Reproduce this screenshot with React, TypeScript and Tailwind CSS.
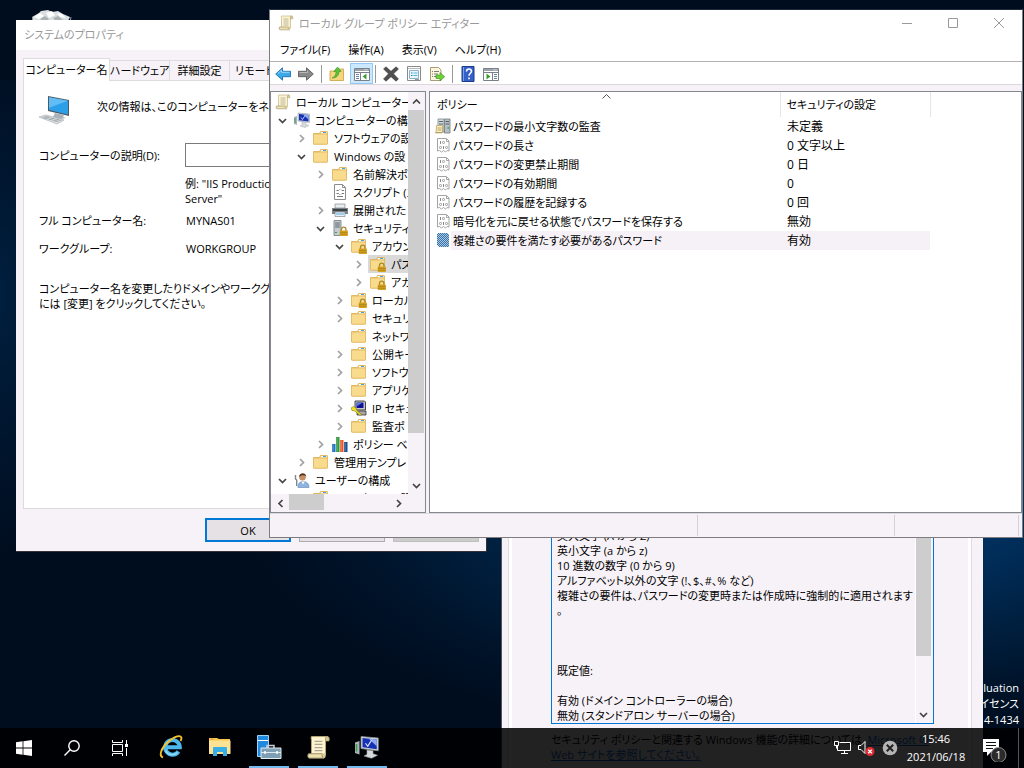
import type { ReactNode } from 'react';

export default function App() {
  return (
    <div className="relative h-screen w-full overflow-hidden bg-[#000d1f] bg-[radial-gradient(ellipse_580px_240px_at_80%_66%,#003a72_0%,#00305f_32%,#002244_54%,#001329_82%,#000d1f_100%)] font-['Open_Sans','Noto_Sans_CJK_JP',sans-serif] text-[11px] leading-[15px] text-black select-none [font-feature-settings:'palt']">
      <div className="absolute top-20 left-0 h-[480px] w-20 bg-[radial-gradient(ellipse_at_0%_45%,#001f3f,transparent_70%)]" />
      <RecycleBin />
      <Watermark />
      <PolicyDialog />
      <SystemProperties />
      <PolicyEditor />
      <Taskbar />
    </div>
  );
}

/* desktop */

function RecycleBin() {
  return (
    <svg className="absolute top-2 left-8" width="40" height="20" viewBox="0 0 40 20">
      <path d="M0 9l7-4 2-2 7-1 4 2 6-1 5 3 7 3-2 4H1z" fill="#d9dee0" />
      <path d="M2 9l6-4 4 3-5 3zM14 5l6-2 3 4-6 3zM25 5l5 1 4 4-6-1z" fill="#fff" />
      <path d="M8 11l5-3 4 3-3 3zM21 10l5-2 5 4-7 1z" fill="#a9b2b5" />
      <path d="M0 9l2 10h35l2-10" fill="none" stroke="#8d999e" />
    </svg>
  );
}

function Watermark() {
  return (
    <div className="absolute right-[5px] bottom-10 text-right leading-4 text-white">
      <p>luation</p>
      <p>イセンス</p>
      <p>4-1434</p>
    </div>
  );
}

/* policy explanation dialog */

const explanation = `英大文字 (A から Z)
英小文字 (a から z)
10 進数の数字 (0 から 9)
アルファベット以外の文字 (!、$、#、% など)
複雑さの要件は、パスワードの変更時または作成時に強制的に適用されます
。



既定値:

有効 (ドメイン コントローラーの場合)
無効 (スタンドアロン サーバーの場合)`;

function PolicyDialog() {
  return (
    <section className="absolute top-[480px] left-[501px] h-[330px] w-[482px] border border-r-0 border-[#555] bg-[#f7f2f7] pt-2 pr-[11px] pl-1.5">
      <div className="h-full border border-[#dcdcdc]">
        <div className="h-full border-x-[3px] border-white pt-[35px] pr-[34px] pl-[39px]">
          <div className="flex h-[199px] border border-[#0078d7]">
            <textarea readOnly aria-label="説明" className="flex-1 resize-none overflow-hidden pt-0.5 pl-[5px] leading-[15px] whitespace-pre outline-none" defaultValue={explanation} />
            <div className="mr-0.5 flex w-4 flex-col border-l border-white">
              <div className="h-[130px] bg-[#cdcdcd]" />
              <button aria-label="下へスクロール" className="mt-auto flex h-[18px] items-center justify-center">
                <Chevron dir="down" />
              </button>
            </div>
          </div>
          <p className="mt-2 -mr-5 whitespace-nowrap">
            セキュリティ ポリシーと関連する Windows 機能の詳細については、
            <a href="#help" className="text-[#0066cc] underline">
              Microsoft の<br />
              Web サイトを参照してください。
            </a>
          </p>
        </div>
      </div>
    </section>
  );
}

/* system properties */

const tabs = ['ハードウェア', '詳細設定', 'リモート'];

function SystemProperties() {
  return (
    <section className="absolute top-5 left-4 flex h-[532px] w-[471px] flex-col border-r border-b border-[#333] bg-[#f7f2f7]">
      <h1 className="h-[30px] bg-white pl-2 leading-[30px] text-[#999]">システムのプロパティ</h1>
      <div role="tablist" className="mt-2 ml-[7px] flex items-end">
        <button role="tab" aria-selected="true" className="z-10 -mb-px h-[23px] w-[87px] border border-b-0 border-[#dcdcdc] bg-white pb-0.5 whitespace-nowrap">
          コンピューター名
        </button>
        {tabs.map((tab) => (
          <button key={tab} role="tab" aria-selected="false" className="h-5 w-[60px] border-t border-r border-[#dcdcdc] whitespace-nowrap last:w-[50px]">
            {tab}
          </button>
        ))}
      </div>
      <div className="mx-[7px] flex-1 border border-[#dcdcdc] bg-white px-[15px] pt-[15px]">
        <div className="flex h-[31px]">
          <Computer />
          <p className="ml-[26px] pt-[3px] whitespace-nowrap">次の情報は、このコンピューターをネット</p>
        </div>
        <div className="mt-4 grid grid-cols-[146px_1fr] items-center">
          <label htmlFor="description">コンピューターの説明(D):</label>
          <input id="description" className="h-6 border border-[#7a7a7a] px-1" />
          <p className="col-start-2 mt-[9px]">
            例: "IIS Productio
            <br />
            Server"
          </p>
          <span className="mt-[7px]">フル コンピューター名:</span>
          <span className="mt-[7px] pl-px">MYNAS01</span>
          <span className="mt-[13px]">ワークグループ:</span>
          <span className="mt-[13px] pl-px">WORKGROUP</span>
        </div>
        <p className="mt-[25px] whitespace-nowrap">
          コンピューター名を変更したりドメインやワークグループ
          <br />
          には [変更] をクリックしてください。
        </p>
      </div>
      <div className="flex justify-end gap-2 py-[9px] pr-[7px]">
        <button className="h-6 w-[86px] border-2 border-[#0078d7] bg-[#e5e1e5]">OK</button>
        <button aria-label="キャンセル" className="h-6 w-[86px] border border-[#adadad] bg-[#e5e1e5]" />
        <button aria-label="適用" disabled className="h-6 w-[86px] border border-[#bfbfbf] bg-[#ccc]" />
      </div>
    </section>
  );
}

/* group policy editor */

const menus = ['ファイル(F)', '操作(A)', '表示(V)', 'ヘルプ(H)'];

type Node = { level: number; label: string; icon: ReactNode; open?: boolean; selected?: boolean };

const tree: Node[] = [
  { level: 0, label: 'ローカル コンピューター ポ', icon: <Scroll /> },
  { level: 1, label: 'コンピューターの構成', icon: <ComputerConfig />, open: true },
  { level: 2, label: 'ソフトウェアの設', icon: <Folder />, open: false },
  { level: 2, label: 'Windows の設', icon: <Folder />, open: true },
  { level: 3, label: '名前解決ポ', icon: <Folder />, open: false },
  { level: 3, label: 'スクリプト (ス', icon: <Script /> },
  { level: 3, label: '展開された', icon: <Printer />, open: false },
  { level: 3, label: 'セキュリティの', icon: <ServerLock />, open: true },
  { level: 4, label: 'アカウン', icon: <Folder lock />, open: true },
  { level: 5, label: 'パス', icon: <Folder lock />, open: false, selected: true },
  { level: 5, label: 'アカ', icon: <Folder lock />, open: false },
  { level: 4, label: 'ローカル', icon: <Folder lock />, open: false },
  { level: 4, label: 'セキュリ', icon: <Folder />, open: false },
  { level: 4, label: 'ネットワ', icon: <Folder /> },
  { level: 4, label: '公開キー', icon: <Folder />, open: false },
  { level: 4, label: 'ソフトウ', icon: <Folder />, open: false },
  { level: 4, label: 'アプリケ', icon: <Folder />, open: false },
  { level: 4, label: 'IP セキュ', icon: <IpSecurity />, open: false },
  { level: 4, label: '監査ポ', icon: <Folder />, open: false },
  { level: 3, label: 'ポリシー ベー', icon: <Bars />, open: false },
  { level: 2, label: '管理用テンプレ', icon: <Folder />, open: false },
  { level: 1, label: 'ユーザーの構成', icon: <User />, open: true },
  { level: 2, label: 'ソフトウェアの設', icon: <Folder /> },
];

const indents = ['pl-0.5', 'pl-0.5', 'pl-[21px]', 'pl-10', 'pl-[59px]', 'pl-[78px]'];

const policies = [
  { name: 'パスワードの最小文字数の監査', value: '未定義', icon: <PolicyServer /> },
  { name: 'パスワードの長さ', value: '0 文字以上', icon: <Binary /> },
  { name: 'パスワードの変更禁止期間', value: '0 日', icon: <Binary /> },
  { name: 'パスワードの有効期間', value: '0', icon: <Binary /> },
  { name: 'パスワードの履歴を記録する', value: '0 回', icon: <Binary /> },
  { name: '暗号化を元に戻せる状態でパスワードを保存する', value: '無効', icon: <Binary /> },
  { name: '複雑さの要件を満たす必要があるパスワード', value: '有効', icon: <Hatched />, selected: true },
];

function PolicyEditor() {
  return (
    <section className="absolute top-[9px] right-px left-[269px] flex h-[529px] flex-col border border-[#7f7c80] border-t-[#1c2a3a] bg-[#f7f2f7]">
      <header className="flex h-7 items-center bg-white pb-0.5 pl-2 text-[#999]">
        <Scroll />
        <h1 className="ml-[5px]">ローカル グループ ポリシー エディター</h1>
        <div className="ml-auto flex">
          <WindowButton label="最小化" path="M0 5.5h10" />
          <WindowButton label="最大化" path="M.5.5h9v9h-9z" />
          <WindowButton label="閉じる" path="M0 0l10 10M10 0L0 10" />
        </div>
      </header>
      <nav className="flex h-6 items-center gap-[18px] border-b border-[#b4b1b6] bg-white pl-2.5">
        {menus.map((item) => (
          <button key={item}>{item}</button>
        ))}
      </nav>
      <Toolbar />
      <div className="mt-1.5 flex min-h-0 flex-1 gap-[3px]">
        <TreePane />
        <ListPane />
      </div>
      <footer className="flex h-6 justify-end border-t border-[#dcd8dc] py-px">
        <div className="w-[197px] border-l border-[#d5d1d5]" />
        <div className="mr-[3px] w-[125px] border-x border-[#d5d1d5]" />
      </footer>
    </section>
  );
}

function WindowButton({ label, path }: { label: string; path: string }) {
  return (
    <button aria-label={label} className="flex h-6 w-[46px] items-center justify-center hover:bg-gray-200">
      <svg width="10" height="10" viewBox="0 0 10 10">
        <path d={path} fill="none" stroke="#999" />
      </svg>
    </button>
  );
}

function Toolbar() {
  return (
    <div className="flex h-[23px] items-center border-b border-[#dcd8dc] bg-white pt-0.5 pl-[5px]">
      <button aria-label="戻る" className="w-[23px]">
        <Arrow left />
      </button>
      <button aria-label="進む" className="w-[23px]">
        <Arrow />
      </button>
      <div className="mr-[5px] h-[18px] border-l border-[#999]" />
      <button aria-label="上へ" className="w-[23px] pl-0.5">
        <FolderUp />
      </button>
      <button aria-label="コンソール ツリー" className="-mt-px flex h-[21px] w-[23px] items-center justify-center border border-[#90c8f6] bg-[#cce8ff]">
        <ConsolePane />
      </button>
      <div className="mr-1 ml-0.5 h-[18px] border-l border-[#999]" />
      <button aria-label="削除" className="w-[23px] pl-[3px]">
        <Cross />
      </button>
      <button aria-label="プロパティ" className="w-[23px] pl-[3px]">
        <Properties />
      </button>
      <button aria-label="エクスポート" className="w-[23px] pl-[3px]">
        <Export />
      </button>
      <div className="mr-1 ml-[3px] h-[18px] border-l border-[#999]" />
      <button aria-label="ヘルプ" className="w-[23px] pl-[3px]">
        <Help />
      </button>
      <button aria-label="操作ウィンドウ" className="w-[23px] pl-[3px]">
        <ConsolePane right />
      </button>
    </div>
  );
}

function TreePane() {
  return (
    <div className="grid w-[156px] grid-cols-[137px_16px] grid-rows-[1fr_18px] border border-[#828790] bg-[#f7f2f7]">
      <ul className="min-h-0 overflow-hidden bg-white pt-px">
        {tree.map((node, index) => (
          <TreeRow key={index} node={node} />
        ))}
      </ul>
      <div className="flex flex-col">
        <button aria-label="上へ" className="flex h-[18px] items-center justify-center">
          <Chevron dir="up" />
        </button>
        <div className="h-[323px] bg-[#cdcdcd]" />
        <button aria-label="下へ" className="mt-auto flex h-[18px] items-center justify-center">
          <Chevron dir="down" />
        </button>
      </div>
      <div className="flex">
        <button aria-label="左へ" className="flex w-[18px] items-center justify-center">
          <Chevron dir="left" />
        </button>
        <div className="mb-0.5 w-[35px] bg-[#cdcdcd]" />
        <button aria-label="右へ" className="mr-px ml-auto flex w-[18px] items-center justify-center">
          <Chevron dir="right" />
        </button>
      </div>
    </div>
  );
}

function TreeRow({ node }: { node: Node }) {
  return (
    <li className={`flex h-[18px] items-center whitespace-nowrap ${indents[node.level]}`}>
      {node.level > 0 && (
        <span className="flex w-[19px] shrink-0 justify-center">
          {node.open === true && <Chevron dir="down" />}
          {node.open === false && <Chevron dir="right" faint />}
        </span>
      )}
      <span className={`flex h-[18px] items-center gap-[5px] pl-0.5 ${node.selected ? 'flex-1 bg-[#d9d9d9]' : ''}`}>
        {node.icon}
        {node.label}
      </span>
    </li>
  );
}

function ListPane() {
  return (
    <div className="relative flex-1 border border-[#828790] bg-white">
      <table className="w-[500px] table-fixed border-collapse text-left">
        <colgroup>
          <col className="w-[21px]" />
          <col className="w-[329px]" />
          <col className="w-[150px]" />
        </colgroup>
        <thead>
          <tr className="h-[25px]">
            <th colSpan={2} className="pl-[7px] font-normal">
              ポリシー
            </th>
            <th className="border-x border-[#e5e5e5] pl-1.5 font-normal">セキュリティの設定</th>
          </tr>
        </thead>
        <tbody>
          {policies.map((policy) => (
            <tr key={policy.name} className="h-[19px]">
              <td className="pt-px pl-[5px] align-top">{policy.icon}</td>
              <td className={`pl-0.5 ${policy.selected ? 'bg-[#f6f1f6]' : ''}`}>{policy.name}</td>
              <td className={`pl-[7px] text-xs ${policy.selected ? 'bg-[#f6f1f6]' : ''}`}>{policy.value}</td>
            </tr>
          ))}
        </tbody>
      </table>
      <svg className="absolute top-0.5 left-[172px]" width="9" height="5" viewBox="0 0 9 5">
        <path d="M.5 4.5l4-4 4 4" fill="none" stroke="#555" />
      </svg>
    </div>
  );
}

/* taskbar */

const apps = [
  { name: 'Internet Explorer', icon: <InternetExplorer />, running: false },
  { name: 'エクスプローラー', icon: <FileExplorer />, running: false },
  { name: 'サーバー マネージャー', icon: <ServerManager />, running: true },
  { name: 'ポリシー エディター', icon: <Scroll size={25} />, running: true },
  { name: 'システム', icon: <ComputerConfig size={24} />, running: true },
];

function Taskbar() {
  return (
    <footer className="absolute inset-x-0 bottom-0 flex h-10 bg-black/86 text-white">
      <button aria-label="スタート" className="flex w-12 items-center justify-center">
        <svg width="16" height="16" viewBox="0 0 16 16" fill="#fff">
          <path d="M0 2.2L6.6 1.3v6.3H0zM7.4 1.2L16 0v7.6H7.4zM0 8.4h6.6v6.3L0 13.8zM7.4 8.4H16V16l-8.6-1.2z" />
        </svg>
      </button>
      <button aria-label="検索" className="flex w-12 items-center justify-center">
        <svg width="16" height="16" viewBox="0 0 16 16" fill="none" stroke="#fff" strokeWidth="1.4">
          <circle cx="10" cy="6" r="5.2" />
          <path d="M6.2 9.8L.5 15.5" />
        </svg>
      </button>
      <button aria-label="タスク ビュー" className="mr-[3px] flex w-12 items-center justify-center">
        <svg width="16" height="16" viewBox="0 0 16 16" fill="none" stroke="#fff">
          <path d="M.5 0v2.500h10V0M.5 4.500h10v7H.5zM.5 16v-2.500h10V16M14.500 0v4M14.500 8v8" />
          <path d="M13 4h3v3h-3z" fill="#fff" stroke="none" />
        </svg>
      </button>
      <div className="flex gap-px">
        {apps.map((app) => (
          <button key={app.name} aria-label={app.name} className="flex w-12 flex-col items-center">
            <span className="flex h-[38px] items-center">{app.icon}</span>
            {app.running && <span className="h-0.5 w-10 bg-[#76b9ed]" />}
          </button>
        ))}
      </div>
      <div className="ml-auto flex items-center">
        <div className="mr-1 flex items-center gap-[7px]">
          <svg width="17" height="16" viewBox="0 0 17 16" fill="none" stroke="#fff">
            <path d="M5.500 2.500h11v8H3.500V6M10.500 10.500v3M7 13.500h7M.5 1.500h4v4h-4zM2.500 5.500v3" />
          </svg>
          <svg width="17" height="16" viewBox="0 0 17 16" fill="none">
            <path d="M.5 5.500h2.500l4-4v12l-4-4H.5z" stroke="#fff" />
            <circle cx="12" cy="11.500" r="4.500" fill="#e02b32" />
            <path d="M10.200 9.700l3.600 3.600M13.800 9.700l-3.600 3.600" stroke="#fff" strokeWidth="1.300" />
          </svg>
          <svg width="16" height="16" viewBox="0 0 16 16" fill="none">
            <circle cx="8" cy="8" r="7.300" fill="#b4b4b4" />
            <path d="M4.800 4.800l6.400 6.400M11.200 4.800l-6.400 6.400" stroke="#222" strokeWidth="2" />
          </svg>
        </div>
        <button className="w-[68px] text-center leading-[18px]">
          15:46
          <br />
          2021/06/18
        </button>
        <button aria-label="通知" className="flex w-12 justify-center">
          <svg width="26" height="28" viewBox="0 0 26 28">
            <path d="M2 5h16v13h-8l-4 4v-4H2z" fill="#fff" />
            <path d="M5 8.500h10M5 11.500h10M5 14.500h7" stroke="#111" />
            <circle cx="17.500" cy="21" r="7.500" fill="#2b2b2b" stroke="#8a8a8a" />
            <text x="17.500" y="25" fill="#fff" fontSize="11" textAnchor="middle">
              1
            </text>
          </svg>
        </button>
        <div className="h-10 w-1.5 border-l border-[#555]" />
      </div>
    </footer>
  );
}

/* icons */

const chevrons = {
  up: 'M1 6.500l3.500-3.500 3.500 3.500',
  down: 'M1 3l3.500 3.500 3.500-3.500',
  left: 'M6.500 1l-3.500 3.500 3.500 3.500',
  right: 'M3 1l3.500 3.500-3.500 3.500',
};

function Chevron({ dir, faint }: { dir: keyof typeof chevrons; faint?: boolean }) {
  return (
    <svg width="9" height="9" viewBox="0 0 9 9">
      <path d={chevrons[dir]} fill="none" stroke={faint ? '#a0a0a0' : '#444'} strokeWidth="1.700" />
    </svg>
  );
}

function Icon({ size = 16, children }: { size?: number; children: ReactNode }) {
  return (
    <svg className="shrink-0" width={size} height={size} viewBox="0 0 16 16" fill="none">
      {children}
    </svg>
  );
}

function Padlock() {
  return (
    <>
      <path d="M9.500 11V9.300a2.200 2.200 0 0 1 4.400 0V11" stroke="#a98a2c" strokeWidth="1.300" />
      <path d="M7.800 10.500h8V16h-8z" fill="#d9a521" />
      <path d="M7.800 12.300h8M7.800 14.200h8" stroke="#9c7413" strokeWidth=".7" />
    </>
  );
}

function Folder({ lock }: { lock?: boolean }) {
  return (
    <Icon>
      <path d="M.5 3.500h6l1-2H14q.5 0 .5.500v12H.5z" fill="#f3cf7c" stroke="#d9ae52" strokeWidth=".8" />
      <path d="M8 2h5.500v1.500H8z" fill="#fff" />
      <path d="M10 2h3v1h-3z" fill="#4a9fe0" />
      <path d="M.5 4h14V13.500q0 .7-.7.7H1.200q-.7 0-.7-.7z" fill="#f9db8e" stroke="#dfb85f" strokeWidth=".8" />
      {lock && <Padlock />}
    </Icon>
  );
}

function Scroll({ size }: { size?: number }) {
  return (
    <Icon size={size}>
      <path d="M3.500 1h10.500c-1.500 0-1.500 2-1.500 3v8.500H3.500V3.500c0-1-.5-1.600 0-2.500z" fill="#fdf3cf" stroke="#b5a878" strokeWidth=".6" />
      <path d="M12.500 3.800h2.200c.5-1.500 0-2.800-1-2.800s-1.400 1.300-1.200 2.800z" fill="#d9cb98" stroke="#a59a70" strokeWidth=".5" />
      <path d="M1.500 12H10.500c-.5 1 0 2.800 1 2.800H2.200c-1.200 0-1.200-1.800-.7-2.800z" fill="#efe2b0" stroke="#958a60" strokeWidth=".6" />
      <path d="M12.500 11.500c.4 1.500 0 3.300-1 3.300s-1.300-1.800-1-2.800" fill="#d9cb98" />
      <path d="M5.500 4h5M5.500 6h5M5.500 8h5M5.500 10h5" stroke="#a9a696" strokeWidth=".8" />
    </Icon>
  );
}

function ComputerConfig({ size }: { size?: number }) {
  return (
    <Icon size={size}>
      <path d="M0 5l3-1v9l-3-1z" fill="#a7b4bb" />
      <path d="M1 6v5" stroke="#3c9c4b" />
      <path d="M4 1l11.500 1v8.500L4 9z" fill="#d2d6da" stroke="#8b9298" strokeWidth=".5" />
      <path d="M5 2l9.500 1v6.500L5 8.200z" fill="#1531b5" />
      <path d="M9 2.400l5.500.6v4.500z" fill="#8fa9f2" />
      <path d="M7 5.500l1.500 2 2.500-4" stroke="#dfe7ff" strokeWidth=".8" />
      <path d="M8 10l4 .5v2l3 1-4 2-5-1.500 2-1z" fill="#d5d9dc" stroke="#9ba2a7" strokeWidth=".4" />
    </Icon>
  );
}

function Script() {
  return (
    <Icon>
      <path d="M2.500.5h8l3 3v12h-11z" fill="#fff" stroke="#8c8c8c" />
      <path d="M10.500.5v3h3" stroke="#8c8c8c" />
      <path d="M4.500 6.500h2l1-1M9 5.500l1 1h2M4.500 9.500h2l1 1M9 10.500l1-1h2M5 12.500h6" stroke="#666" strokeWidth=".9" />
    </Icon>
  );
}

function Printer() {
  return (
    <Icon>
      <path d="M3 2h10v4H3z" fill="#e8edf0" stroke="#777" strokeWidth=".6" />
      <path d="M0 6h16v6H0z" fill="#7d8489" />
      <path d="M1 7h14v2H1z" fill="#3b4045" />
      <path d="M3 10h10v4.500H3z" fill="#e2f1fb" stroke="#777" strokeWidth=".6" />
      <path d="M4 12h8" stroke="#5aa7de" />
    </Icon>
  );
}

function ServerLock() {
  return (
    <Icon>
      <path d="M2 .5h7v15H2z" fill="#c4ccd1" stroke="#6f7a80" strokeWidth=".8" />
      <path d="M3.200 3h4.600M3.200 5h4.600M3.200 7h4.600" stroke="#58646b" />
      <path d="M3 12.500h2" stroke="#3aa24a" />
      <Padlock />
    </Icon>
  );
}

function IpSecurity() {
  return (
    <Icon>
      <path d="M4 1h9.500l1 1v8H4z" fill="#c7c7c7" stroke="#222" strokeWidth=".8" />
      <path d="M5.500 2.500h7v5.500h-7z" fill="#10109a" />
      <path d="M6 3h5l-5 3z" fill="#5b7be6" />
      <path d="M6 11h9v4H6z" fill="#a9a9a9" stroke="#222" strokeWidth=".7" />
      <path d="M0 8l2.500-1.500L5 8l.5 2 5 4.500-1.500 1-5-4.500-3-.5z" fill="#f1e122" stroke="#6b640d" strokeWidth=".5" />
    </Icon>
  );
}

function Bars() {
  return (
    <Icon>
      <path d="M0 8h3.500v8H0z" fill="#1d74c4" />
      <path d="M4 1h3.500v15H4z" fill="#2f9a3c" />
      <path d="M8 4h3.500v12H8z" fill="#e8592b" />
      <path d="M12 6h3.500v10H12z" fill="#184f94" />
      <path d="M1 8.500v7M5 1.500v14M9 4.500v11M13 6.500v9" stroke="#fff" strokeOpacity=".35" />
    </Icon>
  );
}

function User() {
  return (
    <Icon>
      <path d="M1.500 3v4l1.200 1v6" stroke="#7b8791" strokeWidth="1.400" />
      <path d="M4 15.500c0-4 1.500-6 5-6s6 2 6 6z" fill="#8fb4e0" stroke="#5f83b0" strokeWidth=".6" />
      <circle cx="8.500" cy="5.300" r="3.300" fill="#c98f62" />
      <path d="M5.200 5c-.2-4.500 6.500-5 7-.5-2-1.700-4.500-2-7 .5z" fill="#53351f" />
      <path d="M7.500 9.500l1.500 3 1.800-3z" fill="#fff" />
    </Icon>
  );
}

function PolicyServer() {
  return (
    <Icon>
      <path d="M3 1h6v13H3z" fill="#d7dcdf" stroke="#7c868c" strokeWidth=".8" />
      <path d="M9.500 1h5.500v14H9.500z" fill="#b7c0c5" stroke="#6c767c" strokeWidth=".8" />
      <path d="M4 3.500h4M4 6h4M10.500 3.500h3.500M10.500 6h3.500" stroke="#56616a" />
      <path d="M12.500 10h1.500" stroke="#33a344" strokeWidth="1.500" />
      <path d="M1.500 7.500h6v7H1z" fill="#fbeebf" stroke="#b39c55" strokeWidth=".7" />
      <path d="M2.500 10h4M2.500 12h4M0 14.800h7" stroke="#a8914e" strokeWidth=".8" />
    </Icon>
  );
}

function Binary() {
  return (
    <Icon>
      <path d="M2.500 1.500h9l2.500 2.500V14l-2-.5-1.500 1.500-2-1.500-2 1.500-2-1.500-2 .5z" fill="#fff" stroke="#a3a3a3" />
      <path d="M5.500 4v3M8.500 9v3" stroke="#8a8a8a" />
      <rect x="7.500" y="4.500" width="2" height="2" rx=".8" stroke="#909090" strokeWidth=".9" />
      <rect x="4.500" y="9.500" width="2" height="2" rx=".8" stroke="#909090" strokeWidth=".9" />
      <rect x="10.500" y="9.500" width="2" height="2" rx=".8" stroke="#909090" strokeWidth=".9" />
      <path d="M11.500 2v2.500h2.500" stroke="#a3a3a3" />
    </Icon>
  );
}

function Hatched() {
  return (
    <svg width="16" height="16" viewBox="0 0 16 16" shapeRendering="crispEdges">
      <defs>
        <pattern id="hatch" width="2" height="2" patternUnits="userSpaceOnUse">
          <path d="M0 0h1v1H0zM1 1h1v1H1z" fill="#2a76b8" />
        </pattern>
      </defs>
      <path d="M3 1h9l2 2v12H4l-2-2V2z" fill="#b4c4d2" />
      <path d="M3 1h9l2 2v12H4l-2-2V2z" fill="url(#hatch)" />
    </svg>
  );
}

function Arrow({ left }: { left?: boolean }) {
  return left ? (
    <Icon>
      <path d="M.7 8L7.500 1.800v3.500h8v5.400h-8v3.500z" fill="#3ea9ea" stroke="#1d6fae" strokeWidth=".9" />
      <path d="M3 7.500l3.500-3.200v2h8" stroke="#a6dcfa" strokeWidth=".9" />
    </Icon>
  ) : (
    <Icon>
      <path d="M15.300 8L8.500 1.800v3.500h-8v5.400h8v3.500z" fill="#8a8a8a" stroke="#5c5c5c" strokeWidth=".9" />
      <path d="M1.500 6.500h8v-2" stroke="#bdbdbd" strokeWidth=".9" />
    </Icon>
  );
}

function FolderUp() {
  return (
    <Icon>
      <path d="M1 5h5l1-2h7.500v11.500H1z" fill="#f6d57f" stroke="#c99f3c" strokeWidth=".8" />
      <path d="M3 12c3-1 4-3.500 4-6.500H4.800L8.500 1l3.700 4.500H10C10 10 7 12 3 12z" fill="#59c23a" stroke="#2f8a1c" strokeWidth=".5" />
    </Icon>
  );
}

function ConsolePane({ right }: { right?: boolean }) {
  return (
    <Icon>
      <path d="M.5 2.500h15v12H.5z" fill="#fff" stroke="#7a8087" />
      <path d="M1 3h14v2H1z" fill="#9aa3ab" />
      <path d="M.5 6.500h15" stroke="#7a8087" />
      <path d="M10.500 3.800h1M12.500 3.800h1" stroke="#fff" />
      {right ? (
        <>
          <path d="M9.500 7v7" stroke="#7a8087" />
          <path d="M3.500 7.500l4 3-4 3z" fill="#3f9c35" />
          <path d="M11 8.500h3M11 10.500h3M11 12.500h3" stroke="#6a7fa0" />
        </>
      ) : (
        <>
          <path d="M6.500 7v7" stroke="#7a8087" />
          <path d="M12.500 7.500l-4 3 4 3z" fill="#3f9c35" />
          <path d="M2 8.500h3M2 10.500h3M2 12.500h3" stroke="#6a7fa0" />
        </>
      )}
    </Icon>
  );
}

function Cross() {
  return (
    <Icon>
      <path d="M.5 3l2.500-2.200L8 5.300 13 .8l2.500 2.200-5 4.800L15.500 13 13 15.200 8 10.700 3 15.200.5 13l5-5.200z" fill="#505050" stroke="#333" strokeWidth=".5" />
    </Icon>
  );
}

function Properties() {
  return (
    <Icon>
      <path d="M1.500.5h13v14h-13z" fill="#fff" stroke="#8b8b8b" />
      <path d="M2 2.500h12" stroke="#b3bac0" />
      <path d="M3.500 4.500h9v8h-9z" stroke="#8fb1c6" fill="#eaf6fc" />
      <path d="M5 7h1.500M5 9.500h1.500" stroke="#2b7db8" />
      <path d="M7.500 7h4M7.500 9.500h4" stroke="#4fb7d8" />
      <path d="M9 13.500h4" stroke="#999" />
    </Icon>
  );
}

function Export() {
  return (
    <Icon>
      <path d="M1.500 1.500h8l2.500 2.500v10.500H1.500z" fill="#fff8dc" stroke="#a89d78" />
      <path d="M3 5.500h1M5 5.500h5M3 8h1M5 8h4M3 10.500h1M5 10.500h3" stroke="#6b6b78" strokeWidth=".9" />
      <path d="M7 9h4V6.500l4.700 4.200-4.700 4.300v-2.500H7z" fill="#6fd03c" stroke="#38901d" strokeWidth=".6" />
    </Icon>
  );
}

function Help() {
  return (
    <Icon>
      <path d="M2 .5h12v15H2z" fill="#3560c8" stroke="#1b3a8c" />
      <path d="M3.500 1v14" stroke="#7d9fe6" />
      <path d="M6.500 5.500c0-3.300 5-3.300 5-.2 0 2-2.500 2-2.500 4.500M9 11.500v1.800" stroke="#fff" strokeWidth="1.600" />
    </Icon>
  );
}

function Computer() {
  return (
    <svg width="32" height="29" viewBox="0 0 32 29">
      <path d="M9 0l21 4v16L9 15z" fill="#4d5a63" />
      <path d="M10 1.200l19 3.600v13.600L10 14z" fill="#2b9fe8" />
      <path d="M10 1.200l19 3.600-19 7z" fill="#62bdf5" />
      <path d="M16 17l9 2-1 2 3 1-6 1-7-2z" fill="#aab3b9" />
      <path d="M0 21l7-2 18 5-7 4z" fill="#dde1e4" stroke="#a1a9ae" strokeWidth=".6" />
      <path d="M3 21l17 5M5.500 20.200l17 4.700M5 22.500l5-2M10 24l5-2M15 25.300l5-2" stroke="#8f989e" strokeWidth=".6" />
    </svg>
  );
}

function InternetExplorer() {
  return (
    <svg width="24" height="24" viewBox="0 0 24 24" fill="none">
      <path d="M19.500 16.500a7.300 7.300 0 1 1 1.300-4.300H7" stroke="#4db8ee" strokeWidth="4" />
      <path d="M18.500 17.500a7.500 7.500 0 0 1-12-2" stroke="#93dcfa" strokeWidth="1.500" />
      <path d="M4 22.500C-.5 21 2 13 9 7S22-.5 22.500 3c0 1-.5 2-1 3" stroke="#f3c32f" strokeWidth="1.800" />
    </svg>
  );
}

function FileExplorer() {
  return (
    <svg width="22" height="20" viewBox="0 0 22 20">
      <path d="M0 1h8l2 1h11v15H0z" fill="#f7c550" />
      <path d="M0 3.500h21.500V17H0z" fill="#fde293" />
      <path d="M1.500 2h3" stroke="#e98f35" />
      <path d="M4 19v-8q0-1 1-1h12q1 0 1 1v8h-4v-4H8v4z" fill="#38aee6" />
    </svg>
  );
}

function ServerManager() {
  return (
    <svg width="26" height="26" viewBox="0 0 26 26">
      <path d="M1.500 1.500h11v21h-11z" fill="#2088dd" stroke="#9fd1f5" />
      <path d="M2 6.500h10" stroke="#fff" />
      <path d="M11 14v-2.500h7V14" fill="none" stroke="#c3d0d9" strokeWidth="1.500" />
      <path d="M5 14h20v10.500H5z" fill="#7f9fb5" stroke="#e1ebf1" />
      <path d="M5 18.500h20" stroke="#dbe7ee" />
      <path d="M9 17v3M21 17v3" stroke="#fff" strokeWidth="1.500" />
    </svg>
  );
}
